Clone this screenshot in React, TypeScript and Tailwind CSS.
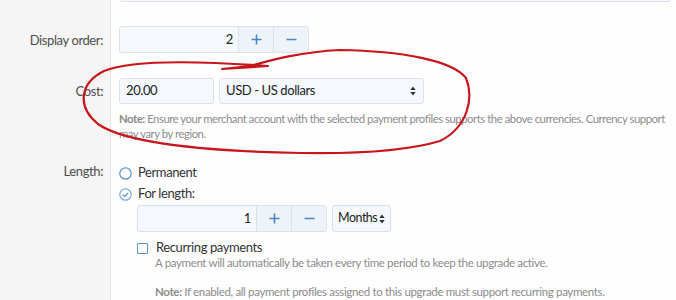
import React from "react";

const font = { fontFamily: '"Lato", "Liberation Sans", sans-serif' };

function Arrows() {
  return (
    <svg width="6" height="10" viewBox="0 0 6 10" className="shrink-0">
      <path d="M3 0.5 L5.7 4 L0.3 4 Z" fill="#333" />
      <path d="M3 9.5 L5.7 6 L0.3 6 Z" fill="#333" />
    </svg>
  );
}

function Spinner({ value, width }: { value: string; width: string }) {
  return (
    <div className={`flex h-[27px] ${width} rounded-[3px] border border-[#dbe1e8] bg-[#f5f9fd] overflow-hidden`}>
      <div className="flex-1 flex items-center justify-end pr-[5px] text-[13px] text-[#222]">{value}</div>
      <div className="w-[35px] flex items-center justify-center border-l border-[#dbe1e8] bg-[#edf3f9]">
        <svg width="11" height="11" viewBox="0 0 11 11"><path d="M5.5 0.5v10M0.5 5.5h10" stroke="#4a86c5" strokeWidth="1.6" /></svg>
      </div>
      <div className="w-[35px] flex items-center justify-center border-l border-[#dbe1e8] bg-[#edf3f9]">
        <svg width="11" height="11" viewBox="0 0 11 11"><path d="M0.5 5.5h10" stroke="#4a86c5" strokeWidth="1.6" /></svg>
      </div>
    </div>
  );
}

export default function App() {
  return (
    <div className="relative w-[676px] h-[300px] overflow-hidden bg-[#fefefe] text-[13px] tracking-[-0.4px] text-[#333]" style={font}>
      <div className="grid grid-cols-[111px_1fr] h-full">
        {/* labels column */}
        <div className="bg-[#f5f5f5] border-r border-[#e6e6e6] flex flex-col items-end pr-[7px] text-[#4d4d4d]">
          <div className="h-[27px] mt-[27px] flex items-center">Display order:</div>
          <div className="h-[26px] mt-[25px] flex items-center">Cost:</div>
          <div className="h-[14px] mt-[60px] flex items-center">Length:</div>
        </div>
        {/* content column */}
        <div className="pl-[8px] flex flex-col">
          <div className="h-[3px] w-[552px] -mt-[1px] rounded-b-[3px] border border-t-0 border-[#dbe1e8] bg-[#f5f9fd]" />
          <div className="mt-[24px]">
            <Spinner value="2" width="w-[190px]" />
          </div>
          <div className="mt-[25px] flex gap-[5px]">
            <div className="h-[26px] w-[95px] rounded-[3px] border border-[#dbe1e8] bg-[#f5f9fd] flex items-center pl-[6px] text-[13px] text-[#222]">20.00</div>
            <div className="h-[26px] w-[205px] rounded-[3px] border border-[#dbe1e8] bg-[#f5f9fd] flex items-center justify-between pl-[6px] pr-[7px] text-[13px] text-[#222]">
              <span>USD - US dollars</span>
              <Arrows />
            </div>
          </div>
          <div className="mt-[7px] text-[11.3px] tracking-[-0.45px] leading-[15px] text-[#8c8c8c]">
            <div className="whitespace-nowrap">
              <b className="font-bold text-[#8c8c8c]">Note:</b> Ensure your merchant account with the selected payment profiles supports the above currencies. Currency support
            </div>
            <div>may vary by region.</div>
          </div>
          <div className="mt-[25px] flex items-center gap-[6px] h-[14px]">
            <svg width="13" height="13" viewBox="0 0 13 13"><circle cx="6.5" cy="6.5" r="5.7" fill="#fff" stroke="#5b93cc" strokeWidth="1.2" /></svg>
            <span>Permanent</span>
          </div>
          <div className="mt-[7px] flex items-center gap-[6px] h-[14px]">
            <svg width="13" height="13" viewBox="0 0 13 13"><circle cx="6.5" cy="6.5" r="5.7" fill="#fff" stroke="#7fa9d6" strokeWidth="1.2" /><path d="M3.8 6.7 L5.8 8.5 L9.2 4.8" fill="none" stroke="#5b93cc" strokeWidth="1.2" /></svg>
            <span>For length:</span>
          </div>
          <div className="mt-[4px] pl-[18px] flex gap-[5px]">
            <Spinner value="1" width="w-[190px]" />
            <div className="h-[27px] w-[59px] rounded-[3px] border border-[#dbe1e8] bg-[#f5f9fd] flex items-center justify-between pl-[5px] pr-[5px] text-[12.5px] tracking-[-0.5px] text-[#222]">
              <span>Months</span>
              <Arrows />
            </div>
          </div>
          <div className="mt-[9px] pl-[18px] flex items-center gap-[8px] h-[14px]">
            <div className="w-[11px] h-[11px] border border-[#5b93cc] rounded-[1px] bg-white" />
            <span>Recurring payments</span>
          </div>
          <div className="pl-[36px] mt-[0px] text-[11.5px] tracking-[-0.35px] leading-[15px] text-[#8c8c8c]">
            A payment will automatically be taken every time period to keep the upgrade active.
          </div>
          <div className="pl-[36px] mt-[14px] text-[11.5px] tracking-[-0.35px] leading-[15px] text-[#8c8c8c]">
            <b className="font-bold">Note:</b> If enabled, all payment profiles assigned to this upgrade must support recurring payments.
          </div>
        </div>
      </div>
      <svg className="absolute inset-0 pointer-events-none" width="676" height="300" viewBox="0 0 676 300">
        <path
          d="M 268 66 C 200 61, 130 60, 104 71 C 78 84, 78 108, 98 124 C 125 143, 200 151, 300 153 C 360 154, 410 150, 440 141 C 468 127, 474 98, 466 78 C 452 60, 400 51, 340 50 C 300 52, 272 60, 250 66 L 222 69 L 268 66"
          fill="none"
          stroke="#c8161d"
          strokeWidth="2.2"
          strokeLinejoin="round"
          strokeLinecap="round"
        />
      </svg>
    </div>
  );
}
